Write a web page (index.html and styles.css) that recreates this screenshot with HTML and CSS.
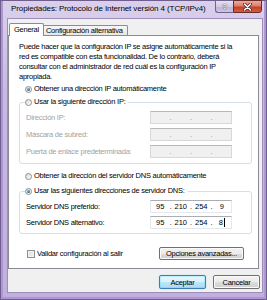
FILE: index.html
```html
<!DOCTYPE html>
<html lang="es">
<head>
    <meta charset="UTF-8">
    <meta name="viewport" content="width=device-width, initial-scale=1.0">
    <title>Propiedades: Protocolo de Internet versión 4 (TCP/IPv4)</title>
    <link rel="stylesheet" href="styles.css">
</head>
<body>
    <div class="window">
        <div class="titlebar">
            <span class="title">Propiedades: Protocolo de Internet versión 4 (TCP/IPv4)</span>
            <div class="caption-buttons">
                <span class="cap-btn help">?</span>
                <span class="cap-btn close">
                    <svg width="9" height="8" viewBox="0 0 9 8">
                        <path d="M1.5 1 L7.5 7 M7.5 1 L1.5 7" stroke="#4a1d17" stroke-width="3" stroke-linecap="round"/>
                        <path d="M1.5 1 L7.5 7 M7.5 1 L1.5 7" stroke="#fff" stroke-width="1.6" stroke-linecap="round"/>
                    </svg>
                </span>
            </div>
        </div>
        <div class="client">
            <div class="tabs">
                <span class="tab active">General</span>
                <span class="tab">Configuración alternativa</span>
            </div>
            <div class="panel">
                <p class="intro">Puede hacer que la configuración IP se asigne automáticamente si la<br>
                red es compatible con esta funcionalidad. De lo contrario, deberá<br>
                consultar con el administrador de red cuál es la configuración IP<br>
                apropiada.</p>

                <div class="option"><span class="radio checked"></span>Obtener una dirección IP automáticamente</div>

                <fieldset class="group">
                    <legend><span class="radio"></span>Usar la siguiente dirección IP:</legend>
                    <div class="field-row disabled">
                        <span class="field-label">Dirección IP:</span>
                        <span class="ip-box"><span class="seg"></span><i>.</i><span class="seg"></span><i>.</i><span class="seg"></span><i>.</i><span class="seg"></span></span>
                    </div>
                    <div class="field-row disabled">
                        <span class="field-label">Máscara de subred:</span>
                        <span class="ip-box"><span class="seg"></span><i>.</i><span class="seg"></span><i>.</i><span class="seg"></span><i>.</i><span class="seg"></span></span>
                    </div>
                    <div class="field-row disabled">
                        <span class="field-label">Puerta de enlace predeterminada:</span>
                        <span class="ip-box"><span class="seg"></span><i>.</i><span class="seg"></span><i>.</i><span class="seg"></span><i>.</i><span class="seg"></span></span>
                    </div>
                </fieldset>

                <div class="option dns-auto"><span class="radio"></span>Obtener la dirección del servidor DNS automáticamente</div>

                <fieldset class="group dns">
                    <legend><span class="radio checked"></span>Usar las siguientes direcciones de servidor DNS:</legend>
                    <div class="field-row">
                        <span class="field-label">Servidor DNS preferido:</span>
                        <span class="ip-box"><span class="seg">95</span><i>.</i><span class="seg">210</span><i>.</i><span class="seg">254</span><i>.</i><span class="seg">9</span></span>
                    </div>
                    <div class="field-row">
                        <span class="field-label">Servidor DNS alternativo:</span>
                        <span class="ip-box"><span class="seg">95</span><i>.</i><span class="seg">210</span><i>.</i><span class="seg">254</span><i>.</i><span class="seg">8<b class="caret"></b></span></span>
                    </div>
                </fieldset>

                <div class="panel-footer">
                    <span class="checkbox"></span>
                    <span>Validar configuración al salir</span>
                    <button class="btn advanced">Opciones avanzadas...</button>
                </div>
            </div>
            <div class="dialog-buttons">
                <button class="btn default">Aceptar</button>
                <button class="btn">Cancelar</button>
            </div>
        </div>
    </div>
</body>
</html>
```

FILE: styles.css
```css
body {
    margin: 0;
    font-family: "Liberation Sans", Arial, sans-serif;
    font-size: 7.5px;
    letter-spacing: -0.25px;
    color: #000;
}
.window {
    width: 267px;
    height: 300px;
    box-sizing: border-box;
    border: 1px solid #6e5d8d;
    padding: 0 3px 6px 6px;
    display: flex;
    flex-direction: column;
    background: linear-gradient(to bottom, #dad0eb 0%, #c9b9e1 30%, #c2afdd 100%);
    box-shadow: inset 2px 0 0 #ad97d2, inset -2px 0 0 #ad97d2, inset 0 -2px 0 #ad97d2;
}
.titlebar {
    height: 17px;
    display: flex;
    align-items: flex-start;
}
.title {
    padding: 3px 0 0 4px;
    font-size: 8px;
    letter-spacing: -0.1px;
    line-height: 10px;
    color: #000;
}
.caption-buttons {
    margin-left: auto;
    margin-right: 1px;
    margin-top: -1px;
    display: flex;
}
.cap-btn {
    height: 13px;
    box-sizing: border-box;
    display: flex;
    align-items: center;
    justify-content: center;
}
.help {
    width: 18px;
    border: 1px solid #6f6390;
    border-right: none;
    border-radius: 0 0 0 3px;
    background: linear-gradient(to bottom, #e6e0f0 0%, #d3cae3 50%, #bfb3d6 51%, #cdc2e0 100%);
    color: #fff;
    font-weight: bold;
    font-size: 8px;
    text-shadow: 0 0 1px #3c3352, 0 0 1px #3c3352;
}
.close {
    width: 29px;
    border: 1px solid #6a2b24;
    border-radius: 0 0 3px 0;
    background: linear-gradient(to bottom, #e9ab9e 0%, #d9806d 45%, #c3412c 55%, #d35c42 100%);
}
.client {
    flex: 1;
    background: #f0f0f0;
    border: 1px solid #9d8db9;
    padding: 4px 0 3px 0;
    display: flex;
    flex-direction: column;
}
.tabs {
    display: flex;
    align-items: flex-end;
    height: 12px;
    padding-left: 1px;
}
.tab {
    box-sizing: border-box;
    height: 10px;
    line-height: 9px;
    padding: 0 4px 0 2px;
    margin-left: -1px;
    border: 1px solid #898c95;
    border-bottom: none;
    border-radius: 2px 2px 0 0;
    background: linear-gradient(to bottom, #f7f7f7, #e6e6e6);
}
.tab.active {
    position: relative;
    z-index: 1;
    height: 13px;
    line-height: 11px;
    margin-left: 0;
    margin-bottom: -1px;
    padding: 0 4px;
    background: #fff;
}
.panel {
    background: #fff;
    border: 1px solid #898c95;
    margin-right: 3px;
    padding: 6px 6px 8px 10px;
}
.intro {
    margin: 0;
    line-height: 10px;
}
.option {
    margin: 2px 0 0 6px;
    height: 10px;
    line-height: 10px;
    display: flex;
    align-items: center;
}
.option.dns-auto {
    margin-top: 7px;
}
.radio {
    width: 7px;
    height: 7px;
    box-sizing: border-box;
    border: 1px solid #8e8f8f;
    border-radius: 50%;
    margin-right: 2px;
    background: linear-gradient(135deg, #d8d8d8, #ffffff);
    display: inline-flex;
    align-items: center;
    justify-content: center;
    flex: none;
}
.radio.checked::after {
    content: "";
    width: 3px;
    height: 3px;
    border-radius: 50%;
    background: radial-gradient(circle at 35% 35%, #7cc4ef, #1d5a8c 70%);
}
.group {
    margin: 3px 0 0 0;
    padding: 4px 6px 5px 5px;
    border: 1px solid #d5dfe5;
    border-radius: 3px;
    min-width: 0;
}
.group.dns {
    margin-top: 5px;
    padding-bottom: 4px;
}
.group legend {
    padding: 0 3px 0 0;
    line-height: 10px;
    display: flex;
    align-items: center;
}
.field-row {
    display: flex;
    align-items: center;
    height: 13px;
    margin-left: 1px;
}
.field-row + .field-row {
    margin-top: 4px;
}
.dns .field-row + .field-row {
    margin-top: 3px;
}
.field-label {
    width: 124px;
}
.disabled .field-label {
    color: #a2a2a2;
}
.ip-box {
    width: 82px;
    height: 13px;
    box-sizing: border-box;
    display: flex;
    align-items: center;
    border: 1px solid #e3e9ef;
    border-top-color: #abadb3;
    background: #fff;
    letter-spacing: 0;
}
.disabled .ip-box {
    background: #f0f0f0;
    border-color: #d8d8d8;
    border-top-color: #b8b8b8;
    color: #8c8c8c;
}
.seg {
    flex: 1;
    text-align: center;
}
.ip-box i {
    font-style: normal;
    width: 2px;
    text-align: center;
}
.caret {
    display: inline-block;
    width: 1px;
    height: 9px;
    margin-left: 1px;
    vertical-align: middle;
    background: #000;
}
.panel-footer {
    margin-top: 13px;
    height: 13px;
    display: flex;
    align-items: center;
}
.checkbox {
    width: 8px;
    height: 8px;
    box-sizing: border-box;
    border: 1px solid #8e8f8f;
    margin: 0 2px 0 8px;
    background: linear-gradient(135deg, #d6d6d6, #f8f8f8);
    box-shadow: inset 0 0 0 1px #f4f4f4;
}
.btn {
    font-family: inherit;
    font-size: inherit;
    letter-spacing: inherit;
    color: #000;
    height: 13px;
    padding: 0;
    box-sizing: border-box;
    border: 1px solid #707070;
    border-radius: 2px;
    background: linear-gradient(to bottom, #f2f2f2 0%, #ebebeb 50%, #dddddd 51%, #cfcfcf 100%);
    box-shadow: inset 0 0 0 1px #fbfbfb;
}
.advanced {
    margin-left: auto;
    margin-right: 8px;
    width: 85px;
}
.dialog-buttons {
    margin-top: 6px;
    padding-right: 2px;
    display: flex;
    justify-content: flex-end;
    gap: 7px;
}
.dialog-buttons .btn {
    width: 47px;
    height: 14px;
}
.btn.default {
    border-color: #3c7fb1;
    background: linear-gradient(to bottom, #eaf6fd 0%, #d9f0fc 50%, #bee6fd 51%, #a7d9f5 100%);
    box-shadow: inset 0 0 0 1px #48d7fb44, 0 0 1px #6cc0ee;
}
```
